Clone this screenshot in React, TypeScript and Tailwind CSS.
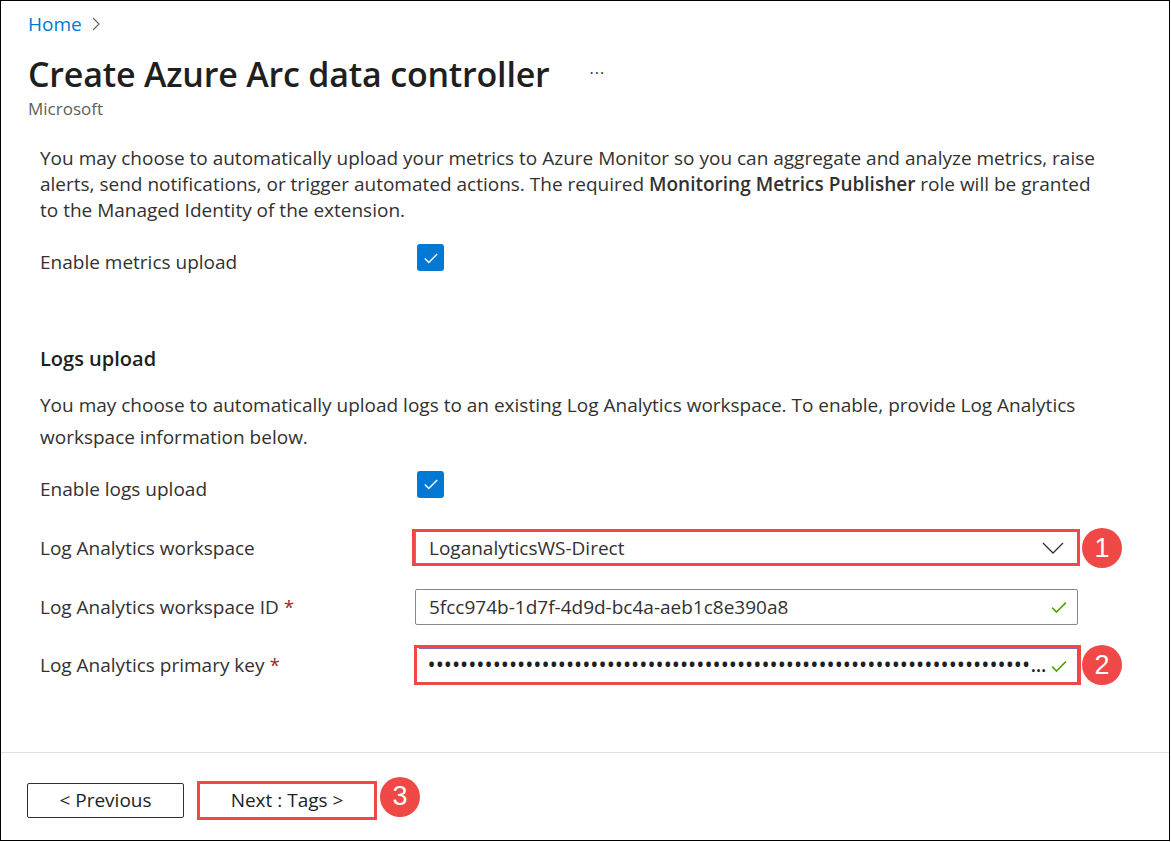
import React from 'react';

const RED = 'border-[#f04747]';

function Check({ className }: { className?: string }) {
  return (
    <svg viewBox="0 0 16 16" className={className} fill="none" stroke="currentColor" strokeWidth="1.3">
      <path d="M2.5 8.5l3.5 3.5 7.5-7.5" />
    </svg>
  );
}

function Checkbox() {
  return (
    <div className="w-[27px] h-[27px] rounded-[3px] bg-[#0078d4] flex items-center justify-center">
      <Check className="w-[18px] h-[18px] text-white" />
    </div>
  );
}

function Badge({ n }: { n: number }) {
  return (
    <div className="w-[40px] h-[40px] rounded-full bg-[#f04747] text-white flex items-center justify-center text-[27px] font-['Liberation_Sans',sans-serif] leading-none shrink-0">
      {n}
    </div>
  );
}

function Label({ text, required }: { text: string; required?: boolean }) {
  return (
    <div className="w-[375px] shrink-0 text-[#323130]">
      {text}
      {required && <span className="text-[#a4262c]"> *</span>}
    </div>
  );
}

export default function App() {
  const dots = '•'.repeat(90);
  return (
    <div className="w-[1170px] h-[841px] border border-black bg-white flex flex-col font-['Open_Sans',sans-serif] text-[19px] text-[#323130]">
      <div className="px-[27px]">
        <div className="h-[32px] mt-[7px] flex items-center gap-[10px] text-[19px] text-[#0078d4]">
          <span>Home</span>
          <svg viewBox="0 0 8 14" className="w-[8px] h-[14px] text-[#605e5c]" fill="none" stroke="currentColor" strokeWidth="1.1">
            <path d="M1 1l6 6-6 6" />
          </svg>
        </div>
        <div className="h-[44px] mt-[12px] flex items-center">
          <h1 className="text-[34px] font-semibold text-[#201f1e] tracking-[-0.2px]">Create Azure Arc data controller</h1>
          <span className="ml-[40px] text-[#323130] text-[16px] tracking-[1px] -mt-[2px]">···</span>
        </div>
        <div className="h-[22px] mt-[2px] flex items-center text-[17px] text-[#605e5c]">Microsoft</div>
      </div>

      <div className="px-[39px] flex-1">
        <p className="mt-[25px] leading-[26px] w-[1060px]">
          You may choose to automatically upload your metrics to Azure Monitor so you can aggregate and analyze metrics, raise alerts, send notifications, or trigger automated actions. The required <b className="font-semibold">Monitoring Metrics Publisher</b> role will be granted to the Managed Identity of the extension.
        </p>

        <div className="mt-[21px] flex items-start">
          <div className="w-[377px] shrink-0 pt-[4px]">Enable metrics upload</div>
          <Checkbox />
        </div>

        <h2 className="mt-[66px] text-[20px] font-semibold text-[#201f1e] h-[32px] flex items-center">Logs upload</h2>

        <p className="mt-[14px] leading-[32px] w-[1060px]">
          You may choose to automatically upload logs to an existing Log Analytics workspace. To enable, provide Log Analytics workspace information below.
        </p>

        <div className="mt-[18px] flex items-start">
          <div className="w-[377px] shrink-0 pt-[4px]">Enable logs upload</div>
          <Checkbox />
        </div>

        <div className="mt-[25px] flex items-center">
          <Label text="Log Analytics workspace" />
          <div className="relative w-[663px] h-[36px] border border-[#8a8886] rounded-[2px] flex items-center pl-[13px] pr-[13px]">
            <span className="flex-1">LoganalyticsWS-Direct</span>
            <svg viewBox="0 0 22 12" className="w-[22px] h-[12px] text-[#323130]" fill="none" stroke="currentColor" strokeWidth="1.3">
              <path d="M1 1l10 10 10-10" />
            </svg>
            <div className={`absolute -left-[4px] -right-[3px] -top-[2px] -bottom-[1px] border-[3px] ${RED}`} />
          </div>
          <div className="ml-[4px]"><Badge n={1} /></div>
        </div>

        <div className="mt-[21px] flex items-center">
          <Label text="Log Analytics workspace ID" required />
          <div className="w-[663px] h-[36px] border border-[#8a8886] rounded-[2px] flex items-center pl-[13px] pr-[8px]">
            <span className="flex-1">5fcc974b-1d7f-4d9d-bc4a-aeb1c8e390a8</span>
            <Check className="w-[20px] h-[20px] text-[#57a300]" />
          </div>
        </div>

        <div className="mt-[20px] flex items-center">
          <Label text="Log Analytics primary key" required />
          <div className="relative w-[663px] h-[38px] flex items-center">
            <div className="ml-[4px] w-[659px] h-[34px] border border-[#8764b8] border-l-0 border-b-0 flex items-center pl-[9px] pr-[8px]">
              <span className="flex-1 min-w-0 truncate tracking-[1px] font-semibold text-[#201f1e]">{dots}</span>
              <Check className="w-[20px] h-[20px] text-[#57a300] ml-[2px] shrink-0" />
            </div>
            <div className={`absolute -left-[1px] -right-[3px] -top-[1px] -bottom-[1px] border-[3px] ${RED}`} />
          </div>
          <div className="ml-[4px]"><Badge n={2} /></div>
        </div>
      </div>

      <div className="h-[88px] border-t border-[#e1dfdd] px-[26px] flex items-center pt-[8px]">
        <button className="w-[157px] h-[35px] border border-[#323130] rounded-[2px] text-[19px] text-[#201f1e] flex items-center justify-center">
          &lt; Previous
        </button>
        <div className={`ml-[13px] w-[180px] h-[39px] border-[3px] ${RED} flex items-center justify-center text-[19px] text-[#201f1e]`}>
          Next : Tags &gt;
        </div>
        <div className="ml-[3px] -mt-[8px]"><Badge n={3} /></div>
      </div>
    </div>
  );
}
